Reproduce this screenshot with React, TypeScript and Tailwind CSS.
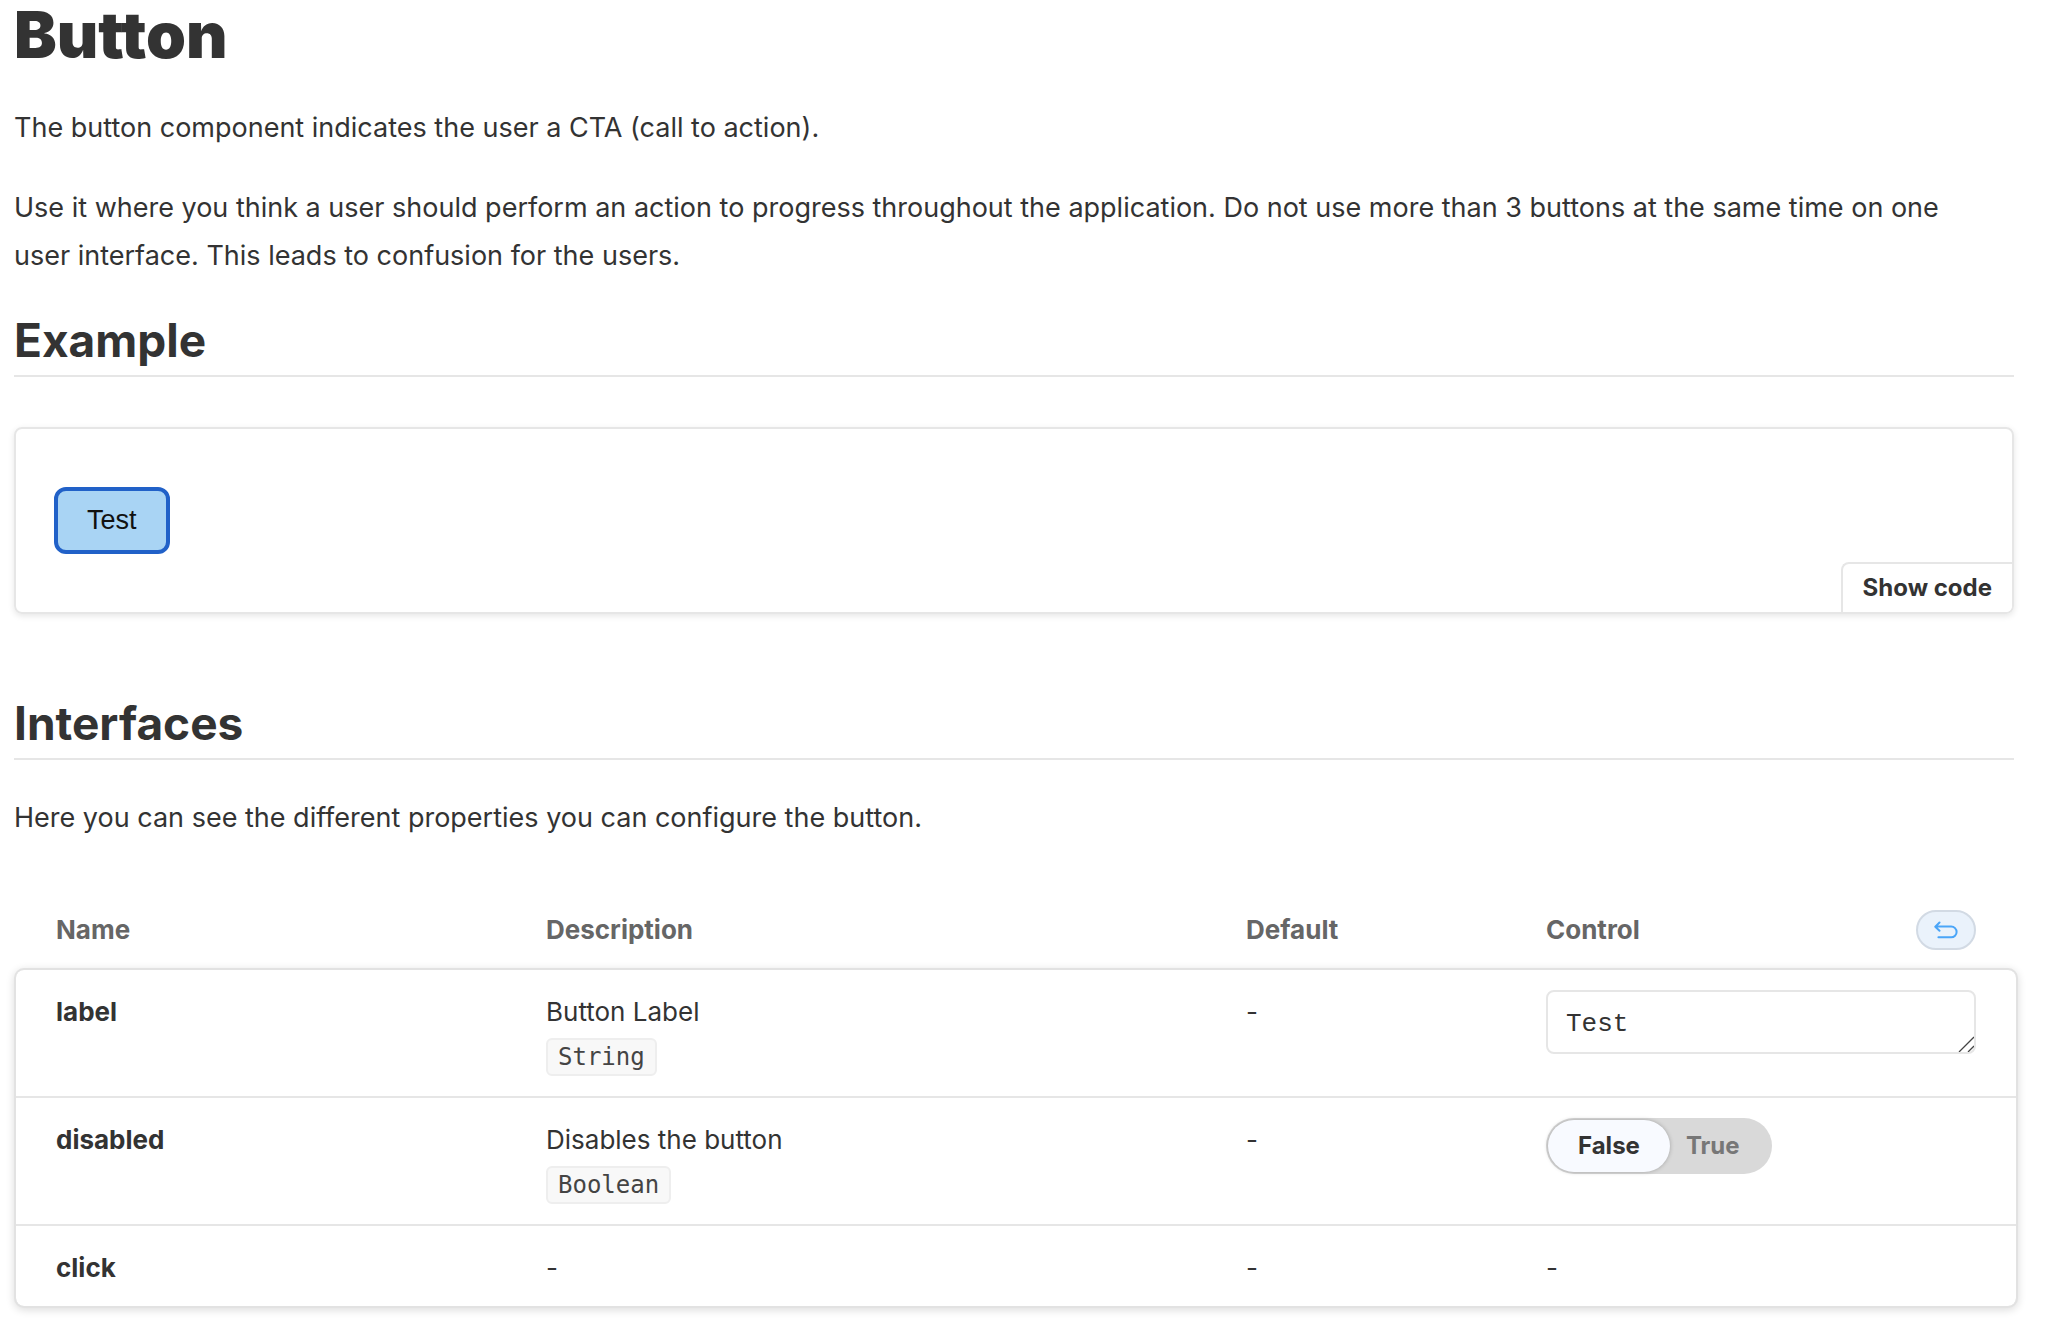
import { useState } from "react";

function SectionTitle({ children }: { children: string }) {
  return (
    <h2 className="border-b-2 border-[#e6e6e6] pb-[5px] text-[46px] leading-[60px] font-bold">
      {children}
    </h2>
  );
}

function TypeTag({ children }: { children: string }) {
  return (
    <code className="block w-fit rounded-md border-2 border-[#eeeeee] bg-[#f8f8f8] px-2.5 font-['DejaVu_Sans_Mono',monospace] text-2xl leading-[34px] text-[#444444]">
      {children}
    </code>
  );
}

function UndoIcon() {
  return (
    <svg viewBox="0 0 24 18" className="h-[18px] w-6" fill="none" stroke="#4aa5f8" strokeWidth="2" strokeLinecap="round" strokeLinejoin="round" aria-hidden="true">
      <path d="M5.5 1.5 1.3 5.7l4.2 4.1M1.5 5.5h15.7a5.4 5.4 0 0 1 0 10.8H4.4" />
    </svg>
  );
}

function LabelControl() {
  const [value, setValue] = useState("Test");
  return (
    <div className="relative h-16">
      <textarea
        id="control-label"
        rows={1}
        value={value}
        onChange={(e) => setValue(e.target.value)}
        className="block h-16 w-full resize-none overflow-hidden rounded-lg border-2 border-[#e6e6e6] bg-white px-[18px] pt-4 pb-3 font-['Liberation_Mono',monospace] text-[26px] leading-8 outline-none"
      />
      <svg viewBox="0 0 16 16" className="pointer-events-none absolute right-0.5 bottom-0.5 size-4" stroke="#444444" strokeWidth="1.3" aria-hidden="true">
        <path d="M1 16 16 1M10 16l6-6" />
      </svg>
    </div>
  );
}

function DisabledControl() {
  const [on, setOn] = useState(false);
  const active = "bg-[#f8faff] text-[#333333] shadow-[0_0_4px_rgba(0,0,0,0.25)]";
  const idle = "text-[#777777]";
  return (
    <label className="relative inline-flex rounded-full bg-[#d9d9d9] p-0.5 text-2xl font-bold">
      <input
        id="control-disabled"
        type="checkbox"
        checked={on}
        onChange={(e) => setOn(e.target.checked)}
        aria-label="disabled"
        className="sr-only"
      />
      <span className={`rounded-full px-[30px] leading-[52px] ${on ? idle : active}`}>False</span>
      <span className={`rounded-full pr-[30px] pl-4 leading-[52px] ${on ? active : idle}`}>True</span>
    </label>
  );
}

const line = "border-b-2 border-[#e6e6e6]";
const nameCell = "pt-[22px] pl-10 align-top font-bold";
const textCell = "px-[30px] pt-[22px] align-top";
const controlCell = "pt-5 pr-10 pl-[30px] align-top";

export default function App() {
  return (
    <main className="min-h-screen bg-white pr-8 pl-3.5 font-['Inter',sans-serif] text-[27px] leading-[48px] text-[#333333]">
      <h1 className="text-[64px] leading-[70px] font-black">Button</h1>
      <p className="mt-[34px] pr-6">The button component indicates the user a CTA (call to action).</p>
      <p className="mt-8 mb-[30px] pr-6">
        Use it where you think a user should perform an action to progress throughout the application. Do not use more
        than 3 buttons at the same time on one user interface. This leads to confusion for the users.
      </p>
      <SectionTitle>Example</SectionTitle>

      <section className="relative mt-[50px] mb-[79px] rounded-lg border-2 border-[#e6e6e6] px-[38px] py-[58px] shadow-[0_2px_6px_rgba(0,0,0,0.10)]">
        <button
          type="button"
          className="block rounded-xl border-4 border-[#2161c8] bg-[#a9d4f4] px-[29px] font-['Liberation_Sans',sans-serif] text-[27px] leading-[59px] text-[#111111]"
        >
          Test
        </button>
        <button
          type="button"
          className="absolute right-0 bottom-0 rounded-tl-lg rounded-br-md border-t-2 border-l-2 border-[#e6e6e6] bg-white px-5 text-2xl leading-[48px] font-bold"
        >
          Show code
        </button>
      </section>

      <SectionTitle>Interfaces</SectionTitle>
      <p className="mt-[34px]">Here you can see the different properties you can configure the button.</p>

      <div className="mt-[68px] ml-0.5 -mr-0.5 text-[26px] leading-10">
        <table className="w-full table-fixed border-separate border-spacing-0 text-left">
          <colgroup>
            <col className="w-1/4" />
            <col className="w-[35%]" />
            <col className="w-[15%]" />
            <col className="w-1/4" />
          </colgroup>
          <thead className="text-[#666666]">
            <tr>
              <th className="pb-5 pl-10 font-bold">Name</th>
              <th className="px-[30px] pb-5 font-bold">Description</th>
              <th className="px-[30px] pb-5 font-bold">Default</th>
              <th className="pr-10 pb-5 pl-[30px] font-bold">
                <div className="flex items-center justify-between">
                  <span>Control</span>
                  <button
                    type="button"
                    aria-label="Reset controls"
                    className="flex h-10 w-[60px] items-center justify-center rounded-full border-2 border-[#d2dae4] bg-[#eaf2fb]"
                  >
                    <UndoIcon />
                  </button>
                </div>
              </th>
            </tr>
          </thead>
          <tbody className="rounded-lg shadow-[0_0_0_2px_#e2e2e2,0_2px_8px_2px_rgba(0,0,0,0.14)]">
            <tr className="h-32">
              <td className={`${nameCell} ${line}`}>
                <label htmlFor="control-label">label</label>
              </td>
              <td className={`${textCell} ${line}`}>
                <p className="mb-1.5">Button Label</p>
                <TypeTag>String</TypeTag>
              </td>
              <td className={`${textCell} ${line}`}>-</td>
              <td className={`${controlCell} ${line}`}>
                <LabelControl />
              </td>
            </tr>
            <tr className="h-32">
              <td className={`${nameCell} ${line}`}>
                <label htmlFor="control-disabled">disabled</label>
              </td>
              <td className={`${textCell} ${line}`}>
                <p className="mb-1.5">Disables the button</p>
                <TypeTag>Boolean</TypeTag>
              </td>
              <td className={`${textCell} ${line}`}>-</td>
              <td className={`${controlCell} ${line}`}>
                <DisabledControl />
              </td>
            </tr>
            <tr className="h-20">
              <td className={nameCell}>click</td>
              <td className={textCell}>-</td>
              <td className={textCell}>-</td>
              <td className={textCell}>-</td>
            </tr>
          </tbody>
        </table>
      </div>
    </main>
  );
}
